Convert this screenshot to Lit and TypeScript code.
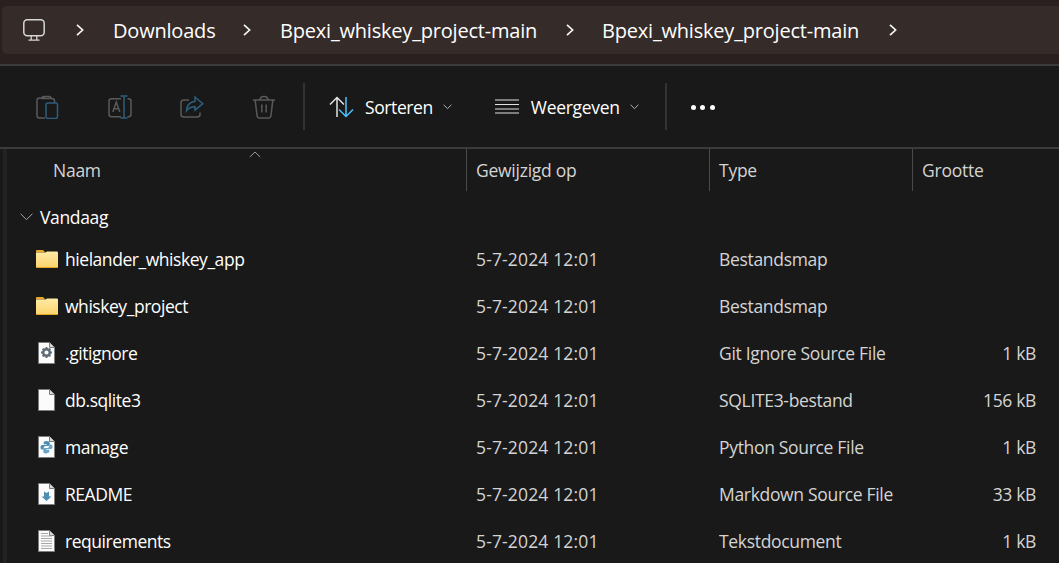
import { LitElement, html, css, svg } from 'lit';
import { customElement } from 'lit/decorators.js';

type IconKind = 'folder' | 'gear' | 'blank' | 'python' | 'markdown' | 'text';

interface FileRow {
  name: string;
  icon: IconKind;
  modified: string;
  type: string;
  size: string;
}

const ROWS: FileRow[] = [
  { name: 'hielander_whiskey_app', icon: 'folder', modified: '5-7-2024 12:01', type: 'Bestandsmap', size: '' },
  { name: 'whiskey_project', icon: 'folder', modified: '5-7-2024 12:01', type: 'Bestandsmap', size: '' },
  { name: '.gitignore', icon: 'gear', modified: '5-7-2024 12:01', type: 'Git Ignore Source File', size: '1 kB' },
  { name: 'db.sqlite3', icon: 'blank', modified: '5-7-2024 12:01', type: 'SQLITE3-bestand', size: '156 kB' },
  { name: 'manage', icon: 'python', modified: '5-7-2024 12:01', type: 'Python Source File', size: '1 kB' },
  { name: 'README', icon: 'markdown', modified: '5-7-2024 12:01', type: 'Markdown Source File', size: '33 kB' },
  { name: 'requirements', icon: 'text', modified: '5-7-2024 12:01', type: 'Tekstdocument', size: '1 kB' },
];

const chevron = html`<svg class="crumb-chevron" width="8" height="12" viewBox="0 0 8 12" fill="none">
  <path d="M1 .8 6.600 6 1 11.200" stroke="#f4f4f4" stroke-width="1.700" />
</svg>`;

const caret = html`<svg class="caret" width="9" height="6" viewBox="0 0 9 6" fill="none">
  <path d="M.6 .8 4.500 4.600 8.400 .8" stroke="#b5b5b5" stroke-width="1" />
</svg>`;

function fileIcon(kind: IconKind) {
  if (kind === 'folder') {
    return html`<svg width="22" height="18" viewBox="0 0 22 18">
      <defs>
        <linearGradient id="fold" x1="0" y1="0" x2="0" y2="1">
          <stop offset="0" stop-color="#ffeaa6" />
          <stop offset="1" stop-color="#fcd56e" />
        </linearGradient>
      </defs>
      <path d="M0 1.200C0 .5.5 0 1.200 0H7l2.400 2.400H0Z" fill="#e8a92c" />
      <path d="M0 2.600h9.400L11 1.600h9.800c.7 0 1.200.5 1.200 1.200V17H0Z" fill="url(#fold)" />
      <path d="M0 17h22c0 .6-.4 1-1 1H1c-.6 0-1-.4-1-1Z" fill="#e4a526" />
    </svg>`;
  }
  let inner = svg``;
  if (kind === 'gear') {
    inner = svg`<circle cx="8.500" cy="12.500" r="3.300" fill="none" stroke="#5f6b75" stroke-width="2.400" />
      <path d="M8.500 7v2M8.500 16v2M3 12.500h2M12 12.500h2M4.600 8.600l1.400 1.400M11 15l1.400 1.400M12.400 8.600 11 10M6 15l-1.400 1.400" stroke="#5f6b75" stroke-width="1.800" />`;
  } else if (kind === 'python') {
    inner = svg`<path d="M8.500 7c-2.300 0-2.800.9-2.800 1.800v1.400h3.100v.7H4.500c-1.200 0-2 .9-2 2.300s.8 2.300 1.800 2.300h1.400v-1.600c0-1 .8-1.800 1.800-1.800h2.600c.9 0 1.600-.7 1.600-1.600V8.800C11.700 7.700 10.700 7 8.500 7Z" fill="#4a8db3" />
      <path d="M8.500 19c2.300 0 2.800-.9 2.800-1.800v-1.400H8.200v-.7h4.300c1.200 0 2-.9 2-2.300s-.8-2.300-1.800-2.300h-1.400v1.600c0 1-.8 1.800-1.800 1.800H6.900c-.9 0-1.600.7-1.600 1.600v2.200c0 1.100 1 1.800 3.200 1.800Z" fill="#66a5c6" />`;
  } else if (kind === 'markdown') {
    inner = svg`<path d="M6 10.500l2.500 1.500 2.500-1.500v5h2.500L8.500 20l-5-4.500H6Z" fill="#4d8fb3" />`;
  } else if (kind === 'text') {
    inner = svg`<path d="M3 5.500h7M3 8h11M3 10.500h11M3 13h11M3 15.500h11M3 18h11M3 20.500h11" stroke="#a8a8a8" stroke-width="1.100" />`;
  }
  return html`<svg width="17" height="22" viewBox="0 0 17 22">
    <path d="M.5.500h11l5 5v16H.500Z" fill="#fbfbfb" stroke="#7d7d7d" />
    <path d="M11.500.500v5h5" fill="#d9d9d9" stroke="#7d7d7d" />
    <g transform="translate(0 -2)">${inner}</g>
  </svg>`;
}

@customElement('app-root')
export class AppRoot extends LitElement {
  static styles = css`
    :host {
      display: block;
      width: 1059px;
      height: 563px;
      overflow: hidden;
      background: #191919;
      color: #fff;
      font-family: 'Open Sans', 'Noto Sans', sans-serif;
    }

    .title-band {
      height: 66px;
      box-sizing: border-box;
      padding: 6px 0 10px 2px;
      background: #2a201f;
      border-bottom: 2px solid #3b3b3b;
    }

    .crumbs {
      height: 48px;
      display: flex;
      align-items: center;
      background: #352b29;
      border-radius: 5px 0 0 5px;
      font-size: 20px;
      letter-spacing: -0.2px;
      color: #fff;
    }

    .crumb-monitor {
      margin-left: 21px;
      width: 22px;
      height: 22px;
    }

    .crumb-chevron {
      flex: none;
    }

    .crumb-text {
      white-space: nowrap;
      flex: none;
    }

    .crumb-root {
      margin-left: 31px;
      display: flex;
    }

    .crumb-downloads {
      margin-left: 29px;
      width: 130px;
    }

    .crumb-middle {
      margin-left: 29px;
      width: 286px;
    }

    .crumb-last {
      margin-left: 28px;
      width: 287px;
    }

    .toolbar {
      height: 81px;
      display: flex;
      align-items: center;
      padding-left: 12px;
      border-bottom: 2px solid #3b3b3b;
      font-size: 17.500px;
      letter-spacing: -0.4px;
    }

    .tool {
      width: 72px;
      display: flex;
      justify-content: center;
    }

    .sep {
      width: 2px;
      height: 47px;
      background: #333;
      flex: none;
      margin-left: 3px;
    }

    .sep.second {
      margin-left: 26px;
    }

    .menu {
      display: flex;
      align-items: center;
      margin-left: 24px;
    }

    .menu.view {
      margin-left: 43px;
      letter-spacing: -0.3px;
    }

    .menu .label {
      white-space: nowrap;
      margin-left: 11px;
    }

    .menu.view .label {
      margin-left: 12px;
    }

    .caret-wrap {
      display: flex;
      margin: 1px 0 0 10px;
    }

    .caret {
      flex: none;
    }

    .dots {
      display: flex;
      gap: 4.500px;
      margin: 1px 0 0 24px;
    }

    .dots i {
      width: 5px;
      height: 5px;
      border-radius: 50%;
      background: #fff;
    }

    .list {
      position: relative;
      font-size: 17.500px;
      letter-spacing: -0.35px;
    }

    .rail {
      position: absolute;
      left: 3px;
      top: 0;
      width: 4px;
      height: 415px;
      background: #222;
    }

    .head,
    .row {
      display: grid;
      grid-template-columns: 466px 243px 203px 135px;
      align-items: center;
    }

    .head {
      height: 42px;
      color: #d4d4d4;
      position: relative;
      letter-spacing: -0.25px;
    }

    .head > div {
      height: 42px;
      display: flex;
      align-items: center;
      padding-left: 9px;
      border-left: 1px solid #4a4a4a;
      box-sizing: border-box;
    }

    .head > div:first-child {
      padding-left: 53px;
      border-left: none;
    }

    .sort-up {
      position: absolute;
      left: 249px;
      top: 2px;
    }

    .group {
      height: 37px;
      padding-top: 7px;
      display: flex;
      align-items: center;
      padding-left: 20px;
      gap: 7px;
    }

    .row {
      height: 47px;
      color: #d4d4d4;
    }

    .name {
      display: flex;
      align-items: center;
      color: #fff;
      white-space: nowrap;
      letter-spacing: -0.45px;
    }

    .name .ico {
      width: 65px;
      box-sizing: border-box;
      display: flex;
      justify-content: center;
      padding-left: 28px;
      flex: none;
    }

    .modified {
      padding-left: 10px;
      white-space: nowrap;
      letter-spacing: 0.15px;
    }

    .type {
      padding-left: 10px;
      white-space: nowrap;
      letter-spacing: -0.32px;
    }

    .size {
      text-align: right;
      padding-right: 11px;
    }
  `;

  render() {
    return html`
      <div class="title-band">
        <div class="crumbs">
          <svg class="crumb-monitor" viewBox="0 0 22 22" fill="none" stroke="#d6d6d6" stroke-width="1.500">
            <rect x=".8" y=".8" width="20.400" height="16" rx="3.500" />
            <path d="M8.200 17v4M13.800 17v4M5.500 21.200h11" stroke-width="1.300" />
          </svg>
          <span class="crumb-root">${chevron}</span>
          <span class="crumb-text crumb-downloads">Downloads</span>
          ${chevron}
          <span class="crumb-text crumb-middle">Bpexi_whiskey_project-main</span>
          ${chevron}
          <span class="crumb-text crumb-last">Bpexi_whiskey_project-main</span>
          ${chevron}
        </div>
      </div>

      <div class="toolbar">
        <div class="tool">
          <svg width="24" height="24" viewBox="0 0 24 24" fill="none">
            <path d="M9 3H3.500C2 3 1 4 1 5.500v15C1 22 2 23 3.500 23H9" stroke="#5a5a5a" stroke-width="1.500" />
            <path d="M6 3.500C6 2 7 1.500 8 1.500h5c1 0 2 .5 2 2H6ZM15 3.500h1c1.500 0 2.500 1 2.500 2.500v2" stroke="#5a5a5a" stroke-width="1.500" />
            <rect x="10" y="8" width="11.500" height="15.500" rx="2" stroke="#2b5f7e" stroke-width="1.500" />
          </svg>
        </div>
        <div class="tool">
          <svg width="24" height="24" viewBox="0 0 24 24" fill="none">
            <path d="M13 3.700H3.500C2 3.700 1 4.700 1 6.200v13C1 20.700 2 21.700 3.500 21.700H13M19.500 3.700h1C22 3.700 23 4.700 23 6.200v13c0 1.500-1 2.500-2.500 2.500h-1" stroke="#5a5a5a" stroke-width="1.500" />
            <path d="M4.800 17 8.300 7l3.500 10M6 13.800h4.600" stroke="#5a5a5a" stroke-width="1.500" />
            <path d="M16 1v22M12.500 1h7M12.500 23h7" stroke="#2b5f7e" stroke-width="1.500" />
          </svg>
        </div>
        <div class="tool">
          <svg width="24" height="24" viewBox="0 0 24 24" fill="none">
            <path d="M9 5H4C2.500 5 1 6 1 7.500V19.500C1 21 2.500 22 4 22h13c1.500 0 3-1 3-2.500v-2" stroke="#5a5a5a" stroke-width="1.500" />
            <path d="M15 2l7.800 6.700-7.800 6.500v-3.400c-4 0-6.500 1.200-8.500 4 .4-5 3-8.800 8.500-9.500Z" stroke="#2b5f7e" stroke-width="1.500" />
          </svg>
        </div>
        <div class="tool">
          <svg width="24" height="24" viewBox="0 0 24 24" fill="none" stroke="#5a5a5a" stroke-width="1.500">
            <path d="M1 5h22M8 5c0-2 1.500-3.500 4-3.500S16 3 16 5M3.200 5 5 20.500C5.200 22 6.200 23 7.800 23h8.400c1.600 0 2.600-1 2.800-2.500L20.800 5M9.800 9.500v8M14.200 9.500v8" />
          </svg>
        </div>
        <div class="sep"></div>
        <div class="menu">
          <svg width="25" height="22" viewBox="0 0 25 22" fill="none" stroke-width="1.500">
            <path d="M8 21V1.500M1 8.500 8 1.500l7 7" stroke="#e2e2e2" />
            <path d="M17 1v19.500M10 13.500l7 7 7-7" stroke="#4cc2ff" />
          </svg>
          <span class="label">Sorteren</span>
          <span class="caret-wrap">${caret}</span>
        </div>
        <div class="menu view">
          <svg width="24" height="15" viewBox="0 0 24 15" stroke="#e2e2e2" stroke-width="1.200">
            <path d="M0 1h24M0 5.500h24M0 10h24M0 14h24" />
          </svg>
          <span class="label">Weergeven</span>
          <span class="caret-wrap">${caret}</span>
        </div>
        <div class="sep second"></div>
        <div class="dots"><i></i><i></i><i></i></div>
      </div>

      <div class="list">
        <div class="rail"></div>
        <div class="head">
          <div>Naam</div>
          <div>Gewijzigd op</div>
          <div>Type</div>
          <div>Grootte</div>
          <svg class="sort-up" width="12" height="7" viewBox="0 0 12 7" fill="none">
            <path d="M.8 6 6 1l5.200 5" stroke="#9a9a9a" />
          </svg>
        </div>
        <div class="group">
          <svg width="13" height="8" viewBox="0 0 13 8" fill="none">
            <path d="M.6.800 6.500 6.600 12.400.8" stroke="#a8a8a8" />
          </svg>
          <span>Vandaag</span>
        </div>
        ${ROWS.map(
          (r) => html`
            <div class="row">
              <div class="name"><span class="ico">${fileIcon(r.icon)}</span>${r.name}</div>
              <div class="modified">${r.modified}</div>
              <div class="type">${r.type}</div>
              <div class="size">${r.size}</div>
            </div>
          `,
        )}
      </div>
    `;
  }
}
